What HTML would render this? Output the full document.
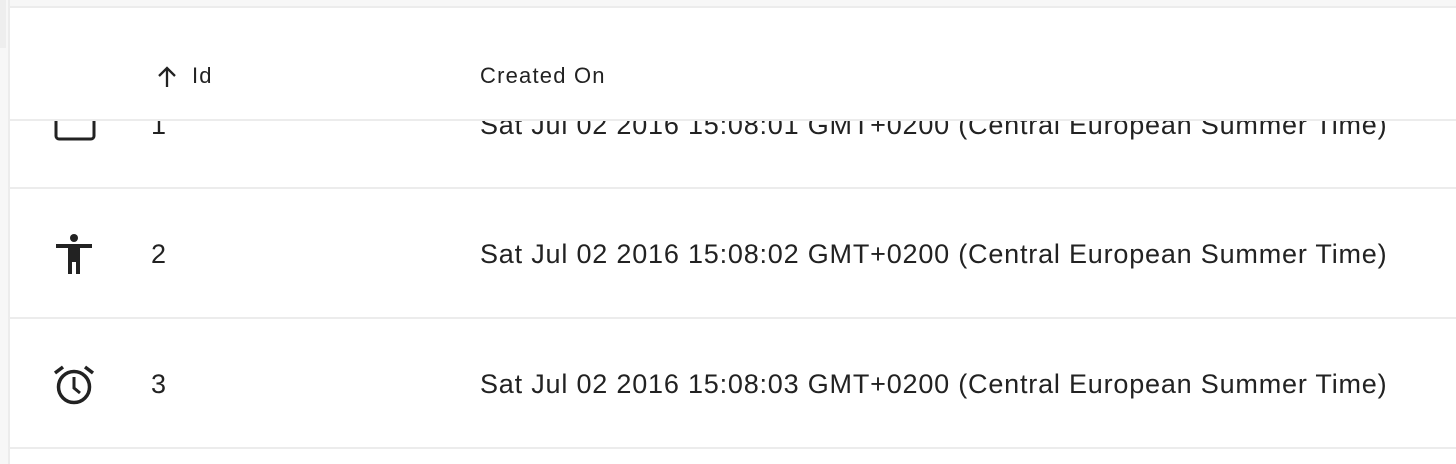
<!DOCTYPE html>
<html><head><meta charset="utf-8"><style>
html,body{margin:0;padding:0;width:1456px;height:464px;overflow:hidden;background:#fff;font-family:"Liberation Sans",sans-serif;color:#222}
.top{position:absolute;left:0;top:0;width:1456px;height:7px;background:#f7f7f7}
.topb{position:absolute;left:0;top:6px;width:1456px;height:2px;background:#ececec}
.left{position:absolute;left:0;top:0;width:8px;height:464px;background:#f7f7f7}
.leftd{position:absolute;left:0;top:0;width:6px;height:48px;background:#eee}
.leftb{position:absolute;left:8px;top:0;width:2px;height:464px;background:#ececec}
.line{position:absolute;left:10px;width:1446px;height:2px;background:#ececec}
.hdr{position:absolute;left:10px;top:8px;width:1446px;height:112px;background:#fff;z-index:2}
.t{position:absolute;font-size:27px;line-height:32px;letter-spacing:0.8px;white-space:nowrap}
.h{position:absolute;font-size:22px;line-height:26px;letter-spacing:1.2px;white-space:nowrap}
svg{position:absolute}
</style></head><body>
<div class="top"></div><div class="topb"></div>
<div class="left"></div><div class="leftd"></div><div class="leftb"></div>

<svg style="left:54px;top:100px" width="42" height="42" viewBox="0 0 42 42"><rect x="2" y="2" width="38" height="37" rx="3" fill="none" stroke="#222" stroke-width="3"/></svg>
<div class="t" style="left:151px;top:109px">1</div>
<div class="t" style="left:480px;top:109px">Sat Jul 02 2016 15:08:01 GMT+0200 (Central European Summer Time)</div>
<div class="line" style="top:187px"></div>

<svg style="left:56px;top:234px" width="36" height="40" viewBox="0 0 36 40"><circle cx="18" cy="4" r="4" fill="#222"/><rect x="0" y="10" width="36" height="4" fill="#222"/><rect x="12" y="10" width="12" height="18" fill="#222"/><rect x="12" y="26" width="4" height="14" fill="#222"/><rect x="20" y="26" width="4" height="14" fill="#222"/></svg>
<div class="t" style="left:151px;top:238px">2</div>
<div class="t" style="left:480px;top:238px">Sat Jul 02 2016 15:08:02 GMT+0200 (Central European Summer Time)</div>
<div class="line" style="top:317px"></div>

<svg style="left:53px;top:364px" width="42" height="42" viewBox="0 0 42 42"><circle cx="21" cy="23" r="15.5" fill="none" stroke="#222" stroke-width="3.5"/><path d="M21 13v11l6 5" fill="none" stroke="#222" stroke-width="3"/><path d="M2 9l8-6M40 9l-8-6" stroke="#222" stroke-width="3.5"/></svg>
<div class="t" style="left:151px;top:368px">3</div>
<div class="t" style="left:480px;top:368px">Sat Jul 02 2016 15:08:03 GMT+0200 (Central European Summer Time)</div>
<div class="line" style="top:447px"></div>

<div class="hdr">
<svg style="left:145px;top:57px" width="24" height="24" viewBox="0 0 24 24"><path d="M12 22V3M4 11l8-8 8 8" fill="none" stroke="#222" stroke-width="2.3"/></svg>
<div class="h" style="left:182px;top:55px">Id</div>
<div class="h" style="left:470px;top:55px">Created On</div>
</div>
<div class="line" style="top:119px;z-index:3"></div>
</body></html>
